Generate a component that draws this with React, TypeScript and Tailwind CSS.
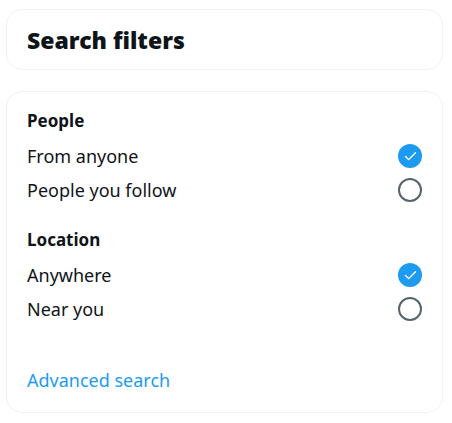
import { Check } from "lucide-react";

type Option = { label: string; checked: boolean };

const sections: { title: string; options: Option[] }[] = [
  {
    title: "People",
    options: [
      { label: "From anyone", checked: true },
      { label: "People you follow", checked: false },
    ],
  },
  {
    title: "Location",
    options: [
      { label: "Anywhere", checked: true },
      { label: "Near you", checked: false },
    ],
  },
];

function Radio({ checked }: { checked: boolean }) {
  if (checked) {
    return (
      <span className="flex h-6 w-6 items-center justify-center rounded-full bg-[#1d9bf0]">
        <Check className="h-[15px] w-[15px] text-white" strokeWidth={2.25} />
      </span>
    );
  }
  return <span className="h-6 w-6 rounded-full border-2 border-[#536471]" />;
}

export default function App() {
  return (
    <div className="flex w-[443px] flex-col gap-[21px] pl-[6px] pt-[9px] font-['Noto_Sans',sans-serif] text-[#0f1419]">
      <section className="rounded-2xl border border-[#eff3f4] px-5 pb-[15px] pt-[16px]">
        <h2 className="text-[23px] leading-7 font-black">Search filters</h2>
      </section>

      <section className="rounded-2xl border border-[#eff3f4] px-5 pb-5 pt-[17px]">
        {sections.map((s, i) => (
          <div key={s.title} className={i > 0 ? "mt-[21px]" : ""}>
            <h3 className="text-[17px] leading-6 font-bold">{s.title}</h3>
            <ul className="mt-[6px]">
              {s.options.map((o) => (
                <li key={o.label} className="flex h-[34px] items-center justify-between">
                  <span className="text-[18px]">{o.label}</span>
                  <Radio checked={o.checked} />
                </li>
              ))}
            </ul>
          </div>
        ))}
        <a href="#" className="mt-[42px] block text-[18px] leading-6 text-[#1d9bf0]">
          Advanced search
        </a>
      </section>
    </div>
  );
}
